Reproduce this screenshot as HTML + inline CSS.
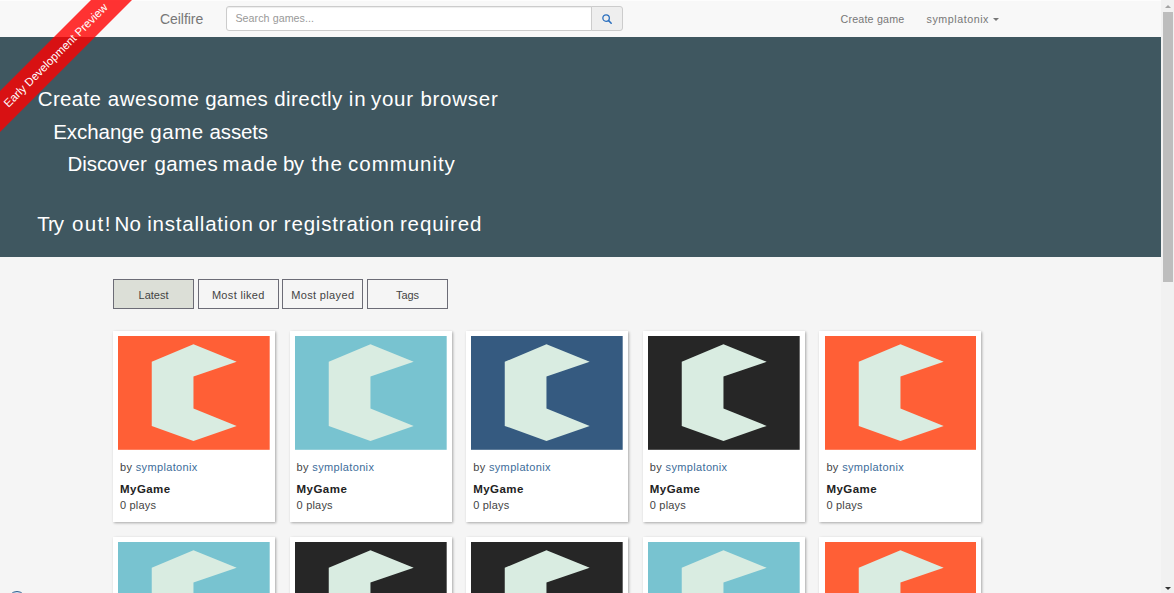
<!DOCTYPE html>
<html lang="en"><head><meta charset="utf-8"><title>Ceilfire</title>
<style>
*{box-sizing:border-box}
html,body{margin:0;padding:0}
body{width:1174px;height:593px;overflow:hidden;position:relative;background:#f5f5f5;font-family:"Liberation Sans",sans-serif;font-size:11px;color:#444}
.abs{position:absolute;white-space:nowrap}
#nav{position:absolute;left:0;top:0;width:1161px;height:37px;background:#f8f8f8;box-shadow:inset 0 1px 0 #fdfdfd}
#hero{position:absolute;left:0;top:37px;width:1161px;height:220px;background:#3f5760;color:#fff}
.h{position:absolute;white-space:nowrap;font-size:20.5px;line-height:24px;color:#fff}
.hl{position:absolute;left:0;top:0;width:0;height:0}
#brand{left:160px;top:9.5px;font-size:14px;line-height:18px;color:#777;letter-spacing:-0.05px}
#search{position:absolute;left:226px;top:6px;width:366px;height:24.5px;background:#fff;border:1px solid #ccc;border-radius:3px 0 0 3px;box-shadow:inset 0 1px 1px rgba(0,0,0,.075)}
#search span{position:absolute;left:8.4px;top:4.2px;font-size:10.7px;line-height:14px;color:#999;letter-spacing:0.06px}
#sbtn{position:absolute;left:591px;top:6px;width:32px;height:24.5px;background:#eee;border:1px solid #ccc;border-radius:0 3px 3px 0}
#sbtn svg{position:absolute;left:10px;top:6.5px;width:10px;height:10px}
.navl{font-size:10.7px;line-height:14px;color:#777;top:11.5px}
#caret{position:absolute;left:993px;top:18px;width:0;height:0;border-left:3px solid transparent;border-right:3px solid transparent;border-top:3px solid #777}
#ribbon{position:absolute;left:-74.5px;top:41px;width:260px;height:29px;line-height:29px;background:rgba(255,0,0,.8);color:#fff;transform:rotate(-45deg);text-align:center;font-size:11.5px;white-space:nowrap}
.tab{position:absolute;top:279px;width:81px;height:30px;border:1px solid #6c6c76;background:transparent;text-align:center;line-height:30px;font-size:11px;color:#444;white-space:nowrap}
.tab.on{background:#dcdfd7}
.card{position:absolute;width:162px;height:190.5px;background:#fff;box-shadow:1px 1px 2.5px rgba(0,0,0,.32)}
.card .thumb{position:absolute;left:5.3px;top:5px;width:151.7px;height:113.8px;display:block}
.card div{position:absolute;left:7px;white-space:nowrap;line-height:14px}
.card .by{top:128.5px;color:#444;letter-spacing:0.35px}
.card .by a{color:#3d6d9a}
.card .title{top:151px;font-weight:bold;color:#222;font-size:11.5px;letter-spacing:0.45px}
.card .plays{top:166.5px;color:#444;letter-spacing:0.19px}
#sb{position:absolute;left:1161px;top:0;width:13px;height:593px;background:#f1f1f1}
#thumb{position:absolute;left:2px;top:12px;width:9.5px;height:269.5px;background:#bdbdbd}
.arr{position:absolute;left:3.5px;width:0;height:0;border-left:3px solid transparent;border-right:3px solid transparent}
#au{top:4.5px;border-bottom:3.5px solid #a3a3a3}
#ad{top:587px;border-top:3px solid #333}
#dot{position:absolute;left:7.7px;top:591.1px;width:18px;height:18px;border-radius:50%;border:1.2px solid #2d5d8e;background:#cfe3f5}
</style></head><body>
<div id="nav">
<div id="brand" class="abs">Ceilfire</div>
<div id="search"><span>Search games...</span></div>
<div id="sbtn"><svg viewBox="0 0 10 10"><circle cx="4.1" cy="4.1" r="3.25" fill="none" stroke="#2a6fbe" stroke-width="1.3"/><path d="M6.6 6.6 L9.2 9.2" stroke="#2a6fbe" stroke-width="1.5" stroke-linecap="round"/></svg></div>
<div class="abs navl" style="left:840.5px;letter-spacing:0.19px">Create game</div>
<div class="abs navl" style="left:926.5px;letter-spacing:0.55px">symplatonix</div>
<div id="caret"></div>
</div>
<div id="hero"></div>
<div class="hl" id="h1">
<span class="h" style="left:37.80px;top:87px;letter-spacing:0.314px">Create</span>
<span class="h" style="left:107.70px;top:87px;letter-spacing:0.594px">awesome</span>
<span class="h" style="left:205.20px;top:87px;letter-spacing:0.255px">games</span>
<span class="h" style="left:274.20px;top:87px;letter-spacing:0.460px">directly</span>
<span class="h" style="left:348.80px;top:87px;letter-spacing:0.846px">in</span>
<span class="h" style="left:370.90px;top:87px;letter-spacing:0.749px">your</span>
<span class="h" style="left:420.40px;top:87px;letter-spacing:0.753px">browser</span>
</div>
<div class="hl" id="h2">
<span class="h" style="left:53.20px;top:120px;letter-spacing:-0.040px">Exchange</span>
<span class="h" style="left:150.30px;top:120px;letter-spacing:0.540px">game</span>
<span class="h" style="left:209.60px;top:120px;letter-spacing:-0.160px">assets</span>
</div>
<div class="hl" id="h3">
<span class="h" style="left:67.60px;top:152.3px;letter-spacing:-0.087px">Discover</span>
<span class="h" style="left:154.40px;top:152.3px;letter-spacing:0.430px">games</span>
<span class="h" style="left:222.50px;top:152.3px;letter-spacing:1.240px">made</span>
<span class="h" style="left:282.90px;top:152.3px;letter-spacing:-0.501px">by</span>
<span class="h" style="left:311.30px;top:152.3px;letter-spacing:1.052px">the</span>
<span class="h" style="left:348.10px;top:152.3px;letter-spacing:0.955px">community</span>
</div>
<div class="hl" id="h4">
<span class="h" style="left:37.20px;top:211.7px;letter-spacing:-0.994px">Try</span>
<span class="h" style="left:71.90px;top:211.7px;letter-spacing:1.434px">out!</span>
<span class="h" style="left:114.40px;top:211.7px;letter-spacing:0.196px">No</span>
<span class="h" style="left:147.20px;top:211.7px;letter-spacing:0.794px">installation</span>
<span class="h" style="left:258.60px;top:211.7px;letter-spacing:0.199px">or</span>
<span class="h" style="left:283.80px;top:211.7px;letter-spacing:0.808px">registration</span>
<span class="h" style="left:399.90px;top:211.7px;letter-spacing:0.898px">required</span>
</div>
<div id="ribbon">Early Development Preview</div>
<div class="tab on" style="left:113px">Latest</div>
<div class="tab" style="left:197.8px;letter-spacing:0.33px">Most liked</div>
<div class="tab" style="left:282.3px;letter-spacing:0.35px">Most played</div>
<div class="tab" style="left:367px">Tags</div>
<div class="card" style="left:113px;top:331px">
<svg class="thumb" viewBox="0 0 400 300" preserveAspectRatio="none"><rect width="400" height="300" fill="#ff5f36"/><polygon fill="#d9ece1" points="199,22 313,68 199,107 199,191 313,237 199,277 89,237 89,68"/></svg>
<div class="by">by <a>symplatonix</a></div>
<div class="title">MyGame</div>
<div class="plays">0 plays</div>
</div>
<div class="card" style="left:289.6px;top:331px">
<svg class="thumb" viewBox="0 0 400 300" preserveAspectRatio="none"><rect width="400" height="300" fill="#78c3d0"/><polygon fill="#d9ece1" points="199,22 313,68 199,107 199,191 313,237 199,277 89,237 89,68"/></svg>
<div class="by">by <a>symplatonix</a></div>
<div class="title">MyGame</div>
<div class="plays">0 plays</div>
</div>
<div class="card" style="left:466.2px;top:331px">
<svg class="thumb" viewBox="0 0 400 300" preserveAspectRatio="none"><rect width="400" height="300" fill="#355a80"/><polygon fill="#d9ece1" points="199,22 313,68 199,107 199,191 313,237 199,277 89,237 89,68"/></svg>
<div class="by">by <a>symplatonix</a></div>
<div class="title">MyGame</div>
<div class="plays">0 plays</div>
</div>
<div class="card" style="left:642.8px;top:331px">
<svg class="thumb" viewBox="0 0 400 300" preserveAspectRatio="none"><rect width="400" height="300" fill="#262626"/><polygon fill="#d9ece1" points="199,22 313,68 199,107 199,191 313,237 199,277 89,237 89,68"/></svg>
<div class="by">by <a>symplatonix</a></div>
<div class="title">MyGame</div>
<div class="plays">0 plays</div>
</div>
<div class="card" style="left:819.4px;top:331px">
<svg class="thumb" viewBox="0 0 400 300" preserveAspectRatio="none"><rect width="400" height="300" fill="#ff5f36"/><polygon fill="#d9ece1" points="199,22 313,68 199,107 199,191 313,237 199,277 89,237 89,68"/></svg>
<div class="by">by <a>symplatonix</a></div>
<div class="title">MyGame</div>
<div class="plays">0 plays</div>
</div>
<div class="card" style="left:113px;top:537px">
<svg class="thumb" viewBox="0 0 400 300" preserveAspectRatio="none"><rect width="400" height="300" fill="#78c3d0"/><polygon fill="#d9ece1" points="199,22 313,68 199,107 199,191 313,237 199,277 89,237 89,68"/></svg>
<div class="by">by <a>symplatonix</a></div>
<div class="title">MyGame</div>
<div class="plays">0 plays</div>
</div>
<div class="card" style="left:289.6px;top:537px">
<svg class="thumb" viewBox="0 0 400 300" preserveAspectRatio="none"><rect width="400" height="300" fill="#262626"/><polygon fill="#d9ece1" points="199,22 313,68 199,107 199,191 313,237 199,277 89,237 89,68"/></svg>
<div class="by">by <a>symplatonix</a></div>
<div class="title">MyGame</div>
<div class="plays">0 plays</div>
</div>
<div class="card" style="left:466.2px;top:537px">
<svg class="thumb" viewBox="0 0 400 300" preserveAspectRatio="none"><rect width="400" height="300" fill="#262626"/><polygon fill="#d9ece1" points="199,22 313,68 199,107 199,191 313,237 199,277 89,237 89,68"/></svg>
<div class="by">by <a>symplatonix</a></div>
<div class="title">MyGame</div>
<div class="plays">0 plays</div>
</div>
<div class="card" style="left:642.8px;top:537px">
<svg class="thumb" viewBox="0 0 400 300" preserveAspectRatio="none"><rect width="400" height="300" fill="#78c3d0"/><polygon fill="#d9ece1" points="199,22 313,68 199,107 199,191 313,237 199,277 89,237 89,68"/></svg>
<div class="by">by <a>symplatonix</a></div>
<div class="title">MyGame</div>
<div class="plays">0 plays</div>
</div>
<div class="card" style="left:819.4px;top:537px">
<svg class="thumb" viewBox="0 0 400 300" preserveAspectRatio="none"><rect width="400" height="300" fill="#ff5f36"/><polygon fill="#d9ece1" points="199,22 313,68 199,107 199,191 313,237 199,277 89,237 89,68"/></svg>
<div class="by">by <a>symplatonix</a></div>
<div class="title">MyGame</div>
<div class="plays">0 plays</div>
</div>
<div id="dot"></div>
<div id="sb"><div id="thumb"></div><div class="arr" id="au"></div><div class="arr" id="ad"></div></div>
</body></html>
